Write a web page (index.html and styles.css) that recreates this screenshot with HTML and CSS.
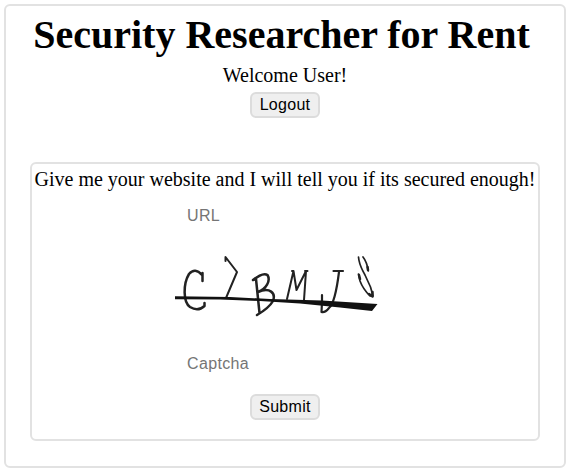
FILE: index.html
```html
<!DOCTYPE html>
<html lang="en">
<head>
<meta charset="utf-8">
<title>Security Researcher for Rent</title>
<link rel="stylesheet" href="styles.css">
</head>
<body>
<main class="page">
  <h1 class="title">Security Researcher for Rent</h1>
  <p class="welcome">Welcome User!</p>
  <button class="button" type="button">Logout</button>
  <form class="panel">
    <p class="prompt">Give me your website and I will tell you if its secured enough!</p>
    <input class="field" type="text" placeholder="URL">
    <svg class="captcha" width="220" height="80" viewBox="170 245 220 80" fill="none" stroke="#222" stroke-width="1.8" stroke-linecap="round" stroke-linejoin="round">
      <path stroke-width="2.500" d="M202.500 281V273M202 275Q195 267 189 274C183 284 183 302 190 307Q198 312 204.500 306V303"/>
      <path stroke-width="2" d="M225.500 261V257L237 272L226 298"/>
      <path stroke-width="2.500" d="M253 280L256 279L259.500 313M253 280Q263 272 267.500 275C271 281 266 289 258 292C270 287 276 293 273 301Q269 308 257 315"/>
      <path stroke-width="2" d="M287 299L293.500 271H292M293.500 271L296.500 290L306 271L304 300M305 271H307.500"/>
      <path stroke-width="2.200" d="M333.500 271H343M339 272C337 288 334 304 329 308Q325 313 321.500 312L322 302V295"/>
      <path stroke-width="1.700" d="M358.500 257C359 265 362 269 365 275L370.500 287L373 296H370Q363 289 360 281L358.500 274M363 257Q367 262 368.300 271"/>
      <path stroke-width="2.500" d="M359 275L360 279M367.500 267L368 270M369 294L372.500 296.500V292"/>
      <path fill="#111" stroke="none" d="M175 296.300L230 297L270 299L322 300.500L377.500 304L372 311L340 307.500L300 303.500L260 301L220 299.600L175 299.200Z"/>
    </svg>
    <input class="field" type="text" placeholder="Captcha">
    <button class="button" type="button">Submit</button>
  </form>
</main>
</body>
</html>
```
FILE: styles.css
```css
* { box-sizing: border-box; }
body { margin: 0; padding: 4px; background: #fff; color: #000; font: 20px/24px "Liberation Serif", serif; }
.page { width: 562px; height: 464px; border: 2px solid #e2e2e2; border-radius: 6px; display: flex; flex-direction: column; align-items: center; }
.title { margin: 6px 7px 0 0; font-size: 40px; line-height: 46px; white-space: nowrap; }
.welcome { margin: 5px 0 0; height: 25px; }
.button { width: 70px; height: 26px; padding: 0; border: 2px solid #dcdcdc; border-radius: 6px; background: #efefef; color: #000; font: 16px/22px "Liberation Sans", sans-serif; letter-spacing: .3px; }
.welcome + .button { margin-top: 4px; }
.panel { margin-top: 44px; width: 510px; height: 279px; border: 2px solid #e2e2e2; border-radius: 6px; display: flex; flex-direction: column; align-items: center; }
.prompt { margin: 3px 0 0; white-space: nowrap; }
.field { width: 200px; height: 34px; margin-top: 8px; border: 0; padding: 0 2px; background: transparent; color: #000; font: 16px "Liberation Sans", sans-serif; letter-spacing: .35px; }
.field::placeholder { color: #757575; }
.captcha { display: block; margin: 12px 0 0 -10px; filter: blur(.4px); }
.captcha + .field { margin-top: 22px; }
.field + .button { margin-top: 13px; }
```
